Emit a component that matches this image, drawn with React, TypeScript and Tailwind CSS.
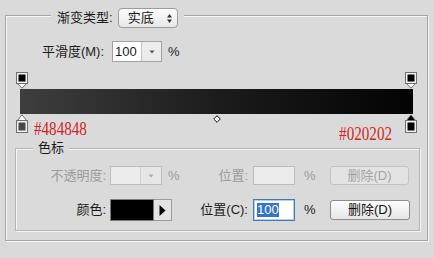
import React from "react";

const etched = "shadow-[1px_1px_0_#f6f6f6,inset_1px_1px_0_#f6f6f6]";

function TopStop() {
  return (
    <svg width="12" height="17" viewBox="0 0 12 17">
      <path d="M1.5 11.5 L10.5 11.5 L6 16.2 Z" fill="#fff" stroke="#6f6f6f" />
      <rect x="0.5" y="0.5" width="11" height="11" fill="#f2f2f2" stroke="#6f6f6f" />
      <rect x="2.5" y="2.5" width="7" height="7" fill="#000" />
    </svg>
  );
}

function BottomStop({ color, active }: { color: string; active?: boolean }) {
  return (
    <svg width="12" height="19" viewBox="0 0 12 19">
      <path d="M6 0.8 L10.5 6.5 L1.5 6.5 Z" fill={active ? "#000" : "#fff"} stroke="#6f6f6f" />
      <rect x="0.5" y="6.5" width="11" height="12" fill="#f2f2f2" stroke="#6f6f6f" />
      <rect x="2.5" y="8.5" width="7" height="8" fill={color} />
    </svg>
  );
}

function SmallCaret({ color }: { color: string }) {
  return (
    <svg width="6" height="4" viewBox="0 0 6 4">
      <path d="M0.5 0.5 L5.5 0.5 L3 3.5 Z" fill={color} />
    </svg>
  );
}

export default function App() {
  return (
    <div className="h-[258px] w-[434px] overflow-hidden bg-[#dadada] pt-[2px] font-['Liberation_Sans','Noto_Sans_CJK_SC',sans-serif] text-[13px] text-[#1a1a1a]">
      <fieldset className={`ml-[5px] w-[423px] border border-[#a4a4a4] ${etched}`}>
        <legend className="ml-[45px] bg-[#dadada] px-[6px] pt-[6px]">
          <div className="flex h-[20px] items-center">
            <span className="leading-[20px]">渐变类型:</span>
            <div className="ml-[5px] flex h-[20px] w-[60px] items-center justify-between rounded-[4px] border border-[#9c9c9c] bg-linear-to-b from-[#fdfdfd] to-[#e8e8e8] pl-[9px] pr-[5px]">
              <span className="leading-[18px]">实底</span>
              <svg width="5" height="9" viewBox="0 0 5 9">
                <path d="M2.5 0 L5 3.5 L0 3.5 Z" fill="#333" />
                <path d="M0 5.5 L5 5.5 L2.5 9 Z" fill="#333" />
              </svg>
            </div>
          </div>
        </legend>

        <div className="mt-[13px] flex h-[21px] items-center">
          <span className="w-[98px] text-right">平滑度(M):</span>
          <div className="ml-[8px] flex h-[21px] w-[50px] border border-[#a2a2a2]">
            <div className="flex w-[28px] items-center bg-white pl-[2px] leading-[19px]">100</div>
            <div className="flex flex-1 items-center justify-center border-l border-[#c4c4c4] bg-[#ececec]">
              <SmallCaret color="#555" />
            </div>
          </div>
          <span className="ml-[6px]">%</span>
        </div>

        <div className="mt-[10px] flex h-[17px] justify-between px-[10px]">
          <TopStop />
          <TopStop />
        </div>
        <div className="mx-[14px] h-[25px] bg-[linear-gradient(to_right,#3e3e3e,#1c1c1c_50%,#030303)]" />
        <div className="grid h-[26px] grid-cols-[1fr_auto_1fr] px-[10px]">
          <div className="flex items-start">
            <BottomStop color="#484848" />
            <span className="ml-[6px] mt-[6px] origin-left scale-x-[0.84] whitespace-nowrap font-['Liberation_Serif',serif] text-[18px] leading-[18px] text-[#d42424]">
              #484848
            </span>
          </div>
          <div className="pt-[1px]">
            <svg width="8" height="8" viewBox="0 0 8 8">
              <path d="M4 0.7 L7.3 4 L4 7.3 L0.7 4 Z" fill="#fff" stroke="#111" />
            </svg>
          </div>
          <div className="flex items-start justify-end">
            <span className="mr-[13px] mt-[11px] origin-right scale-x-[0.84] whitespace-nowrap font-['Liberation_Serif',serif] text-[18px] leading-[18px] text-[#d42424]">
              #020202
            </span>
            <BottomStop color="#000" active />
          </div>
        </div>

        <fieldset className={`mb-[9px] ml-[9px] mr-[7px] border border-[#b4b4b4] pb-[9px] ${etched}`}>
          <legend className="ml-[17px] bg-[#dadada] px-[5px] leading-[16px]">色标</legend>

          <div className="mt-[10px] flex h-[19px] items-center text-[#9b9b9b]">
            <span className="w-[90px] text-right">不透明度:</span>
            <div className="ml-[4px] flex w-[76px] items-center">
              <div className="flex h-[19px] w-[52px] border border-[#bcbcbc]">
                <div className="w-[29px] bg-[#ececec]" />
                <div className="flex flex-1 items-center justify-center border-l border-[#cfcfcf] bg-[#e6e6e6]">
                  <SmallCaret color="#aaa" />
                </div>
              </div>
              <span className="ml-[6px]">%</span>
            </div>
            <span className="w-[62px] text-right">位置:</span>
            <div className="ml-[5px] h-[19px] w-[42px] border border-[#bcbcbc] bg-[#ebebeb]" />
            <span className="w-[35px] pl-[9px]">%</span>
            <button className="h-[19px] w-[79px] rounded-[3px] border border-[#c2c2c2] bg-[#e3e3e3] text-[13px] leading-[17px] text-[#a3a3a3]">
              删除(D)
            </button>
          </div>

          <div className="mt-[14px] flex h-[22px] items-center">
            <span className="w-[90px] text-right">颜色:</span>
            <div className="ml-[4px] flex w-[76px] items-center">
              <div className="h-[22px] w-[44px] border border-[#7a7a7a] bg-black" />
              <div className="flex h-[22px] w-[18px] items-center justify-center border border-l-0 border-[#9a9a9a] bg-[#e4e4e4]">
                <svg width="7" height="11" viewBox="0 0 7 11">
                  <path d="M0.5 0 L6.5 5.5 L0.5 11 Z" fill="#000" />
                </svg>
              </div>
            </div>
            <span className="w-[62px] text-right">位置(C):</span>
            <div className="ml-[5px] flex h-[22px] w-[42px] items-center border border-[#3f7bbb] bg-white pl-[3px] shadow-[inset_0_0_0_1px_#b3cfee]">
              <span className="bg-[#3375c6] leading-[14px] text-white">100</span>
            </div>
            <span className="w-[35px] pl-[9px]">%</span>
            <button className="h-[20px] w-[80px] rounded-[3px] border border-[#8c8c8c] bg-linear-to-b from-[#fdfdfd] to-[#e6e6e6] text-[13px] leading-[18px] text-[#111]">
              删除(D)
            </button>
          </div>
        </fieldset>
      </fieldset>
    </div>
  );
}
